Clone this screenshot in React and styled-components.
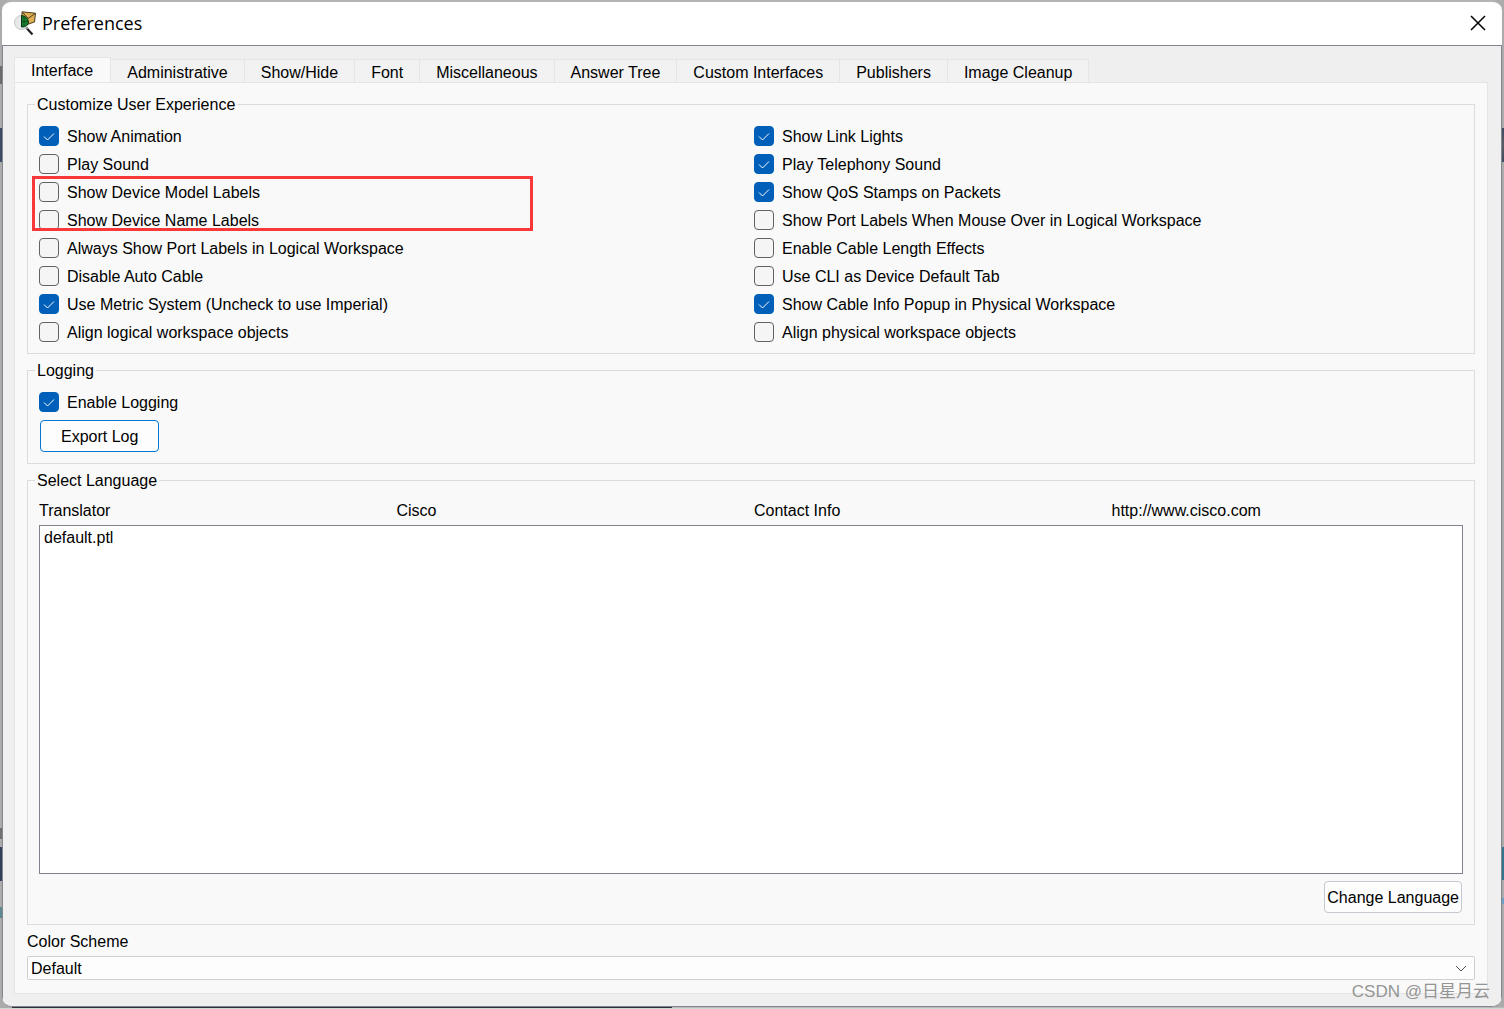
import { useState } from "react";
import styled, { createGlobalStyle } from "styled-components";

const GlobalStyle = createGlobalStyle`
  *, *::before, *::after {
    box-sizing: border-box;
  }
  body {
    margin: 0;
  }
  body, button, select, input {
    font-family: "Liberation Sans", Arial, sans-serif;
    font-size: 16px;
    line-height: 18px;
    color: #000;
  }
`;

const Desktop = styled.div`
  position: relative;
  display: flex;
  min-height: 100vh;
  padding: 0 2px 2px;
  background:
    linear-gradient(#6b6b6b, #6b6b6b) 0 66px / 2px 18px no-repeat,
    linear-gradient(#3c4a63, #3c4a63) 0 128px / 2px 34px no-repeat,
    linear-gradient(#6f6f6f, #6f6f6f) 0 828px / 2px 11px no-repeat,
    linear-gradient(#33405c, #33405c) 0 847px / 2px 34px no-repeat,
    linear-gradient(#5f8790, #5f8790) 0 907px / 2px 11px no-repeat,
    linear-gradient(#3c4a63, #5c5c60, #3c4a63) 100% 128px / 2px 34px no-repeat,
    linear-gradient(#33758f, #33758f) 100% 847px / 2px 33px no-repeat,
    linear-gradient(#6a9fc8, #6a9fc8) 100% 898px / 2px 6px no-repeat,
    linear-gradient(90deg, #2c323b 660px, #b8b8b8 660px) 12px calc(100% - 1px) / 100% 1px no-repeat,
    linear-gradient(#d4d8d4, #d4d8d4) 0 100% / 100% 1px no-repeat,
    #ababab;
`;

const Dialog = styled.main`
  flex: 1;
  min-width: 0;
  display: flex;
  flex-direction: column;
  border: solid #b4b4b4;
  border-width: 2px 0 1px;
  border-bottom-color: #85858f;
  border-radius: 10px;
  background: #fff;
  overflow: hidden;
`;

const TitleBar = styled.header`
  display: flex;
  align-items: center;
  gap: 5px;
  height: 43px;
  padding: 0 16px 2px 12px;
`;

const Title = styled.h1`
  flex: 1;
  margin: 0;
  font: 400 18px/24px "Open Sans", sans-serif;
`;

const CloseButton = styled.button`
  display: flex;
  padding: 0;
  border: 0;
  background: none;
`;

const Body = styled.div`
  flex: 1;
  display: flex;
  flex-direction: column;
  padding: 11px 13px 12px 11px;
  border: solid #85858f;
  border-width: 1px 1px 0;
  background: #efefef;
`;

const TabList = styled.div`
  display: flex;
  align-items: flex-end;
`;

const Tab = styled.button`
  height: ${(p) => (p.$active ? "26px" : "23px")};
  margin-bottom: ${(p) => (p.$active ? "-1px" : "0")};
  padding: ${(p) => (p.$active ? "0 17px 0 16px" : "3px 16px 0")};
  border: solid #e5e5e5;
  border-width: ${(p) => (p.$active ? "1px 1px 0" : "1px 1px 0 0")};
  background: ${(p) => (p.$active ? "#f9f9f9" : "#f2f2f2")};
  white-space: nowrap;
`;

const Panel = styled.div`
  flex: 1;
  display: flex;
  flex-direction: column;
  padding: 11px 12px 13px;
  border: 1px solid #e5e5e5;
  background: #f9f9f9;
`;

const Group = styled.fieldset`
  display: flex;
  flex-direction: column;
  flex: ${(p) => (p.$grow ? 1 : "none")};
  min-width: 0;
  margin: 0 0 6px;
  padding: 8px 11px ${(p) => (p.$grow || p.$roomy ? "11px" : "7px")};
  border: 1px solid #dcdcdc;
`;

const Legend = styled.legend`
  margin-left: -4px;
  padding: 2px 2px 0;
`;

const Columns = styled.div`
  display: grid;
  grid-template-columns: 1fr 1fr;
  column-gap: 6px;
`;

const CheckLabel = styled.label`
  display: flex;
  align-items: center;
  gap: 8px;
  height: 28px;
`;

const CheckText = styled.span`
  padding-top: 2px;
`;

const Box = styled.span`
  position: relative;
  display: flex;
  width: 20px;
  height: 20px;

  svg {
    position: absolute;
    inset: 0;
    pointer-events: none;
  }
`;

const BoxInput = styled.input`
  appearance: none;
  width: 20px;
  height: 20px;
  margin: 0;
  border: 1px solid #626262;
  border-radius: 4px;
  background: #f5f5f5;

  &:checked {
    border-color: #005fb8;
    background: #005fb8;
  }
`;

const Highlight = styled.div`
  position: absolute;
  left: -7px;
  top: 54px;
  width: 501px;
  height: 55px;
  border: 3px solid #f93939;
  pointer-events: none;
`;

const CheckColumn = styled.div`
  position: relative;
`;

const Button = styled.button`
  height: 32px;
  padding: ${(p) => (p.$primary ? "2px 20px 0" : "2px 2px 0")};
  border: 1px solid ${(p) => (p.$primary ? "#0078d4" : "#c4c8cf")};
  border-radius: 4px;
  background: #fdfdfd;
`;

const ButtonRow = styled.div`
  display: flex;
  justify-content: ${(p) => (p.$end ? "flex-end" : "flex-start")};
  padding: ${(p) => (p.$end ? "7px 1px 0" : "4px 1px 0")};
`;

const LanguageInfo = styled.div`
  display: grid;
  grid-template-columns: repeat(4, 1fr);
  column-gap: 6px;
  padding: 4px 0 5px;
`;

const LanguageList = styled.select`
  flex: 1;
  appearance: none;
  width: 100%;
  min-height: 120px;
  padding: 3px 0;
  border: 1px solid #82828c;
  border-radius: 0;
  background: #fff;

  option {
    min-height: 18px;
    padding: 0 4px;
  }
`;

const SchemeLabel = styled.label`
  padding: 2px 0 5px;
`;

const SelectWrap = styled.div`
  position: relative;
  display: flex;

  svg {
    position: absolute;
    right: 8px;
    top: 9px;
    pointer-events: none;
  }
`;

const SchemeSelect = styled.select`
  appearance: none;
  flex: 1;
  height: 24px;
  padding: 2px 24px 0 3px;
  border: 1px solid #cfcfcf;
  border-radius: 2px;
  background: #fdfdfd;
`;

const Watermark = styled.div`
  position: absolute;
  right: 14px;
  bottom: 5px;
  font: 17px/24px "Liberation Sans", "Noto Sans CJK SC", sans-serif;
  color: #959595;
`;

const TABS = [
  "Interface",
  "Administrative",
  "Show/Hide",
  "Font",
  "Miscellaneous",
  "Answer Tree",
  "Custom Interfaces",
  "Publishers",
  "Image Cleanup",
];

const LEFT = [
  ["Show Animation", true],
  ["Play Sound", false],
  ["Show Device Model Labels", false],
  ["Show Device Name Labels", false],
  ["Always Show Port Labels in Logical Workspace", false],
  ["Disable Auto Cable", false],
  ["Use Metric System (Uncheck to use Imperial)", true],
  ["Align logical workspace objects", false],
];

const RIGHT = [
  ["Show Link Lights", true],
  ["Play Telephony Sound", true],
  ["Show QoS Stamps on Packets", true],
  ["Show Port Labels When Mouse Over in Logical Workspace", false],
  ["Enable Cable Length Effects", false],
  ["Use CLI as Device Default Tab", false],
  ["Show Cable Info Popup in Physical Workspace", true],
  ["Align physical workspace objects", false],
];

const AppIcon = () => (
  <svg width="23" height="24" viewBox="0 0 23 24" aria-hidden="true">
    <circle cx="7.500" cy="11.500" r="7" fill="#e6e9e8" stroke="#c3c7c5" />
    <path d="M8 .8 21.500 2.200 20.500 11 13 13.500 8 10Z" fill="#dcae55" stroke="#4f3d1d" />
    <path d="m8.500 1.300 5.500 6.200 7-5" fill="none" stroke="#4f3d1d" />
    <path d="M7.500 4.500c4 .5 6.500 3 7 6.500-.5 3-2.500 5-7 5Z" fill="#14802e" stroke="#0c3014" />
    <path d="M10 6v9M8 10.500h6" stroke="#0c4a1a" strokeWidth=".8" />
    <path d="m12.500 17 6 6.500" stroke="#222" strokeWidth="2.200" />
    <path d="M12 16.500l1.500 1.500" stroke="#999" strokeWidth="2" />
  </svg>
);

const CheckBox = ({ label, initial }) => {
  const [checked, setChecked] = useState(initial);
  return (
    <CheckLabel>
      <Box>
        <BoxInput type="checkbox" checked={checked} onChange={() => setChecked(!checked)} />
        {checked && (
          <svg width="20" height="20" fill="none" stroke="#fff">
            <path d="m5 10.500 3.500 3.500 6.500-6.500" />
          </svg>
        )}
      </Box>
      <CheckText>{label}</CheckText>
    </CheckLabel>
  );
};

export default function App() {
  const [tab, setTab] = useState("Interface");

  return (
    <>
      <GlobalStyle />
      <Desktop>
        <Dialog>
          <TitleBar>
            <AppIcon />
            <Title>Preferences</Title>
            <CloseButton aria-label="Close">
              <svg width="16" height="16" stroke="#000" strokeWidth="1.500">
                <path d="m1 1 14 14M15 1 1 15" />
              </svg>
            </CloseButton>
          </TitleBar>
          <Body>
            <TabList role="tablist">
              {TABS.map((name) => (
                <Tab
                  key={name}
                  role="tab"
                  aria-selected={tab === name}
                  $active={tab === name}
                  onClick={() => setTab(name)}
                >
                  {name}
                </Tab>
              ))}
            </TabList>
            <Panel>
              <Group>
                <Legend>Customize User Experience</Legend>
                <Columns>
                  <CheckColumn>
                    {LEFT.map(([label, on]) => (
                      <CheckBox key={label} label={label} initial={on} />
                    ))}
                    <Highlight />
                  </CheckColumn>
                  <CheckColumn>
                    {RIGHT.map(([label, on]) => (
                      <CheckBox key={label} label={label} initial={on} />
                    ))}
                  </CheckColumn>
                </Columns>
              </Group>

              <Group $roomy>
                <Legend>Logging</Legend>
                <CheckBox label="Enable Logging" initial={true} />
                <ButtonRow>
                  <Button $primary>Export Log</Button>
                </ButtonRow>
              </Group>

              <Group $grow>
                <Legend>Select Language</Legend>
                <LanguageInfo>
                  <span>Translator</span>
                  <span>Cisco</span>
                  <span>Contact Info</span>
                  <span>http://www.cisco.com</span>
                </LanguageInfo>
                <LanguageList size={4} aria-label="Language files">
                  <option>default.ptl</option>
                </LanguageList>
                <ButtonRow $end>
                  <Button>Change Language</Button>
                </ButtonRow>
              </Group>

              <SchemeLabel htmlFor="scheme">Color Scheme</SchemeLabel>
              <SelectWrap>
                <SchemeSelect id="scheme">
                  <option>Default</option>
                </SchemeSelect>
                <svg width="12" height="8" fill="none" stroke="#555">
                  <path d="m1 1 5 5 5-5" />
                </svg>
              </SelectWrap>
            </Panel>
          </Body>
        </Dialog>
        <Watermark>CSDN @日星月云</Watermark>
      </Desktop>
    </>
  );
}
